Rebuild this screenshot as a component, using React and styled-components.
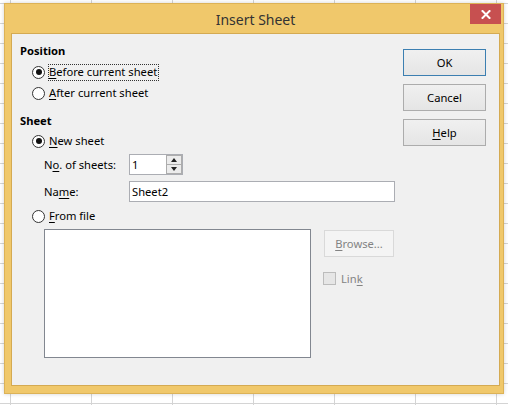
import React from "react"
import styled, { createGlobalStyle } from "styled-components"

const GlobalStyle = createGlobalStyle`
  html, body {
    margin: 0;
    padding: 0;
  }
  body {
    width: 508px;
    height: 405px;
    overflow: hidden;
    font-family: "Noto Sans", "Segoe UI", sans-serif;
    font-size: 11.2px;
    color: #000;
    background-color: #fff;
    background-image:
      linear-gradient(to right, #d4d4d4 1px, transparent 1px),
      linear-gradient(to bottom, #d4d4d4 1px, transparent 1px);
    background-size: 81px 20px;
    background-position: 10px 3px;
  }
`

const Page = styled.div`
  padding: 3px 0 0 4px;
`

const Window = styled.div`
  width: 500px;
  height: 391px;
  box-sizing: border-box;
  background: #f0c86b;
  border: 1px solid #dcb257;
  box-shadow: 0 0 4px rgba(0, 0, 0, 0.18);
  display: flex;
  flex-direction: column;
  padding: 0 3px 7px 6px;
`

const TitleBar = styled.div`
  height: 29px;
  display: grid;
  grid-template-columns: 1fr auto 1fr;
  align-items: center;
`

const Title = styled.div`
  grid-column: 2;
  font-size: 14px;
  color: #333;
  padding-top: 1px;
`

const CloseButton = styled.div`
  grid-column: 3;
  justify-self: end;
  align-self: start;
  width: 31px;
  height: 20px;
  background: #c75050;
  display: flex;
  align-items: center;
  justify-content: center;
  margin-right: -1px;
`

const Client = styled.div`
  flex: 1;
  background: #f0f0f0;
  border: 1px solid #d4aa52;
  display: flex;
  padding: 7px 0 0 8px;
`

const LeftColumn = styled.div`
  width: 375px;
  display: flex;
  flex-direction: column;
`

const Heading = styled.div`
  height: 18px;
  display: flex;
  align-items: center;
  font-weight: bold;
  margin-top: ${p => p.$mt || 0}px;
`

const Row = styled.div`
  display: flex;
  align-items: center;
  height: ${p => p.$h || 18}px;
  margin-top: ${p => p.$mt || 0}px;
  padding-left: ${p => p.$indent || 0}px;
`

const RadioMark = styled.span`
  width: 13px;
  height: 13px;
  box-sizing: border-box;
  border-radius: 50%;
  border: 1px solid #333;
  background: #fff;
  display: flex;
  align-items: center;
  justify-content: center;
  margin-right: 4px;
  &::after {
    content: "";
    width: 6px;
    height: 6px;
    border-radius: 50%;
    background: ${p => (p.$checked ? "#111" : "transparent")};
  }
`

const RadioLabel = styled.span`
  border: 1px ${p => (p.$focused ? "dotted #333" : "solid transparent")};
  padding: 0 1px 1px 0;
  margin-left: -1px;
  line-height: 14px;
`

const Key = styled.span`
  text-decoration: underline;
  text-underline-offset: 2px;
`

const FieldLabel = styled.span`
  width: 85px;
  flex-shrink: 0;
`

const TextBox = styled.div`
  height: 21px;
  box-sizing: border-box;
  border: 1px solid #abadb3;
  background: #fff;
  display: flex;
  align-items: center;
  padding-left: 2px;
  width: ${p => (p.$w ? `${p.$w}px` : "auto")};
  flex: ${p => (p.$w ? "none" : 1)};
`

const SpinValue = styled.span`
  flex: 1;
`

const SpinButtons = styled.div`
  width: 15px;
  height: 19px;
  display: flex;
  flex-direction: column;
  border-left: 1px solid #acacac;
`

const SpinButton = styled.div`
  flex: 1;
  background: #ececec;
  border: 1px solid #adadad;
  border-left: none;
  border-top: ${p => (p.$down ? "none" : "1px solid #adadad")};
  display: flex;
  align-items: center;
  justify-content: center;
  &::after {
    content: "";
    border-left: 3px solid transparent;
    border-right: 3px solid transparent;
    ${p =>
      p.$down
        ? "border-top: 4px solid #222;"
        : "border-bottom: 4px solid #222;"}
  }
`

const FileArea = styled.div`
  display: flex;
  margin-top: 4px;
  padding-left: 24px;
`

const ListBox = styled.div`
  width: 267px;
  height: 129px;
  box-sizing: border-box;
  border: 1px solid #828790;
  background: #fff;
`

const FileSide = styled.div`
  display: flex;
  flex-direction: column;
  align-items: flex-start;
  margin-left: 13px;
  padding-top: 1px;
`

const CheckRow = styled.div`
  display: flex;
  align-items: center;
  margin-top: 14px;
  margin-left: -1px;
  color: #838383;
`

const CheckMark = styled.span`
  width: 13px;
  height: 13px;
  box-sizing: border-box;
  border: 1px solid #bcbcbc;
  background: #e6e6e6;
  margin-right: 5px;
`

const ButtonColumn = styled.div`
  display: flex;
  flex-direction: column;
  gap: 8px;
  margin-left: 8px;
  padding-top: 8px;
`

const Button = styled.div`
  width: ${p => p.$w || 83}px;
  height: 27px;
  box-sizing: border-box;
  display: flex;
  align-items: center;
  justify-content: center;
  border: 1px solid ${p => (p.$default ? "#3c7fb1" : p.$disabled ? "#d9d9d9" : "#acacac")};
  background: ${p =>
    p.$disabled ? "#f4f4f4" : "linear-gradient(#f0f0f0, #e5e5e5)"};
  color: ${p => (p.$disabled ? "#838383" : "#000")};
`

const CloseIcon = () => (
  <svg width="10" height="9" viewBox="0 0 10 9">
    <path d="M1.5 1 L8.5 8 M8.5 1 L1.5 8" stroke="#fff" strokeWidth="2" strokeLinecap="square" />
  </svg>
)

const App = () => {
  return (
    <Page>
      <GlobalStyle />
      <Window>
        <TitleBar>
          <Title>Insert Sheet</Title>
          <CloseButton>
            <CloseIcon />
          </CloseButton>
        </TitleBar>
        <Client>
          <LeftColumn>
            <Heading>Position</Heading>
            <Row $mt={4} $indent={12}>
              <RadioMark $checked />
              <RadioLabel $focused>
                <Key>B</Key>efore current sheet
              </RadioLabel>
            </Row>
            <Row $mt={3} $indent={12}>
              <RadioMark />
              <RadioLabel>
                <Key>A</Key>fter current sheet
              </RadioLabel>
            </Row>
            <Heading $mt={9}>Sheet</Heading>
            <Row $mt={3} $indent={12}>
              <RadioMark $checked />
              <RadioLabel>
                <Key>N</Key>ew sheet
              </RadioLabel>
            </Row>
            <Row $mt={4} $h={21} $indent={24}>
              <FieldLabel>
                N<Key>o</Key>. of sheets:
              </FieldLabel>
              <TextBox $w={54}>
                <SpinValue>1</SpinValue>
                <SpinButtons>
                  <SpinButton />
                  <SpinButton $down />
                </SpinButtons>
              </TextBox>
            </Row>
            <Row $mt={6} $h={21} $indent={24}>
              <FieldLabel>
                Na<Key>m</Key>e:
              </FieldLabel>
              <TextBox>Sheet2</TextBox>
            </Row>
            <Row $mt={5} $indent={12}>
              <RadioMark />
              <RadioLabel>
                <Key>F</Key>rom file
              </RadioLabel>
            </Row>
            <FileArea>
              <ListBox />
              <FileSide>
                <Button $w={70} $disabled>
                  <span>
                    <Key>B</Key>rowse...
                  </span>
                </Button>
                <CheckRow>
                  <CheckMark />
                  <span>
                    Lin<Key>k</Key>
                  </span>
                </CheckRow>
              </FileSide>
            </FileArea>
          </LeftColumn>
          <ButtonColumn>
            <Button $default>OK</Button>
            <Button>Cancel</Button>
            <Button>
              <span>
                <Key>H</Key>elp
              </span>
            </Button>
          </ButtonColumn>
        </Client>
      </Window>
    </Page>
  )
}

export default App
